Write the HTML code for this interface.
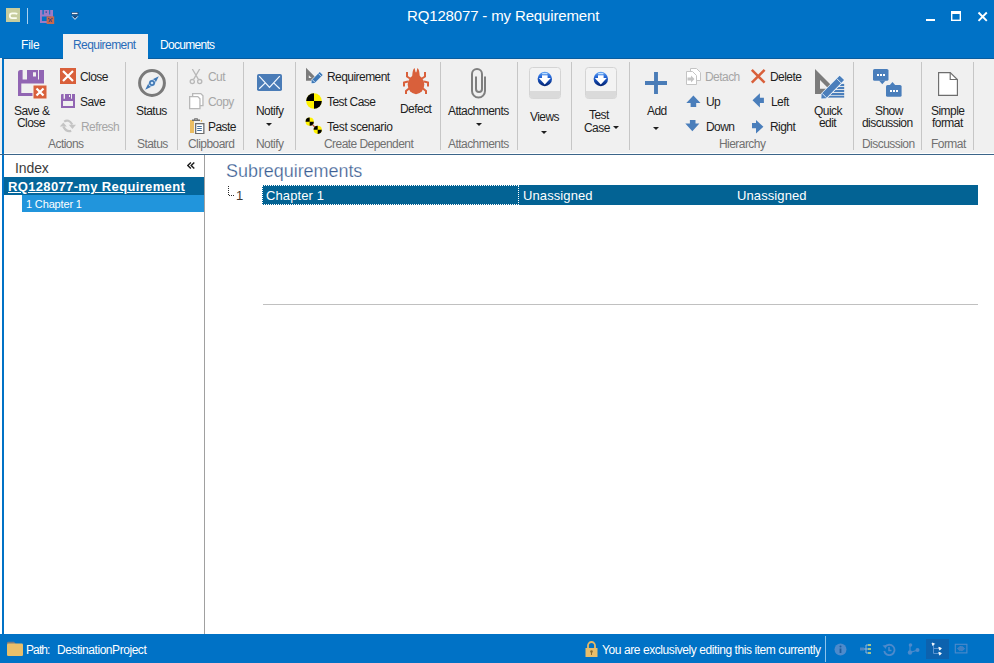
<!DOCTYPE html>
<html><head><meta charset="utf-8"><title>RQ128077 - my Requirement</title>
<style>
html,body{margin:0;padding:0;}
body{width:994px;height:663px;overflow:hidden;position:relative;background:#fff;font-family:"Liberation Sans",sans-serif;}
.t{position:absolute;white-space:pre;}
.r{position:absolute;display:block;}
</style></head><body>
<div class="r" style="left:0px;top:0px;width:994px;height:58px;background:#0072c6;"></div>
<div class="r" style="left:63px;top:34px;width:85px;height:24px;background:#f0f0f0;"></div>
<div class="r" style="left:0px;top:58px;width:2px;height:95px;background:#f0f0f0;"></div>
<div class="r" style="left:2px;top:58px;width:2px;height:576px;background:#0072c6;"></div>
<div class="r" style="left:4px;top:58px;width:990px;height:95px;background:#f0f0f0;"></div>
<div class="r" style="left:2px;top:58px;width:61px;height:1px;background:#0a5d9e;"></div>
<div class="r" style="left:148px;top:58px;width:846px;height:1px;background:#0a5d9e;"></div>
<div class="r" style="left:0px;top:154px;width:994px;height:1px;background:#3b6589;"></div>
<div class="r" style="left:204px;top:155px;width:1px;height:479px;background:#a0a0a0;"></div>
<div class="r" style="left:0px;top:634px;width:994px;height:29px;background:#0072c6;"></div>
<div class="t" style="left:407px;top:8px;font-size:15px;line-height:15px;color:#ffffff;letter-spacing:-0.15px;">RQ128077 - my Requirement</div>
<svg class="r" style="left:6px;top:8px" width="14" height="14" viewBox="0 0 14 14"><rect width="14" height="14" fill="#c7cd9e"/><path d="M11.2 6.3Q10.5 5.3 9 5.3H6.2a2.4 2.4 0 0 0 0 4.8H10.8" fill="none" stroke="#fbfdf0" stroke-width="1.7"/></svg>
<div class="r" style="left:27px;top:8px;width:1px;height:16px;background:#a9d1f0;"></div>
<svg class="r" style="left:40px;top:10px" width="15" height="15" viewBox="0 0 15 15"><path fill-rule="evenodd" fill="#9d7bc6" d="M0 0H13V13H0ZM2.4 0H3.8V4.6H2.4ZM9.2 0H10.2V4.6H9.2ZM1.9 6.5H11.1V11.1H1.9Z"/><rect x="5.6" y="1.2" width="1.2" height="1.8" fill="#3d4f9a"/><rect x="6.6" y="6.4" width="7.6" height="7.6" fill="#c9694d"/><path d="M8.4 8.2l4 4M12.4 8.2l-4 4" stroke="#2c3f80" stroke-width="1.1" stroke-dasharray="1.2 0.6"/></svg>
<svg class="r" style="left:71px;top:11px" width="8" height="10" viewBox="0 0 8 10"><rect x="0.5" y="1" width="7" height="3.2" fill="#204b7a"/><rect x="1" y="1.8" width="5.5" height="1.3" fill="#eef5fc"/><path d="M0.8 4.8L4 8.3L7.2 4.8z" fill="#204b7a"/><path d="M1.2 5.4L4 8.4L6.8 5.4" fill="none" stroke="#dceafa" stroke-width="1"/></svg>
<div class="r" style="left:926px;top:19px;width:9px;height:2px;background:#ffffff;"></div>
<svg class="r" style="left:951px;top:11px" width="10" height="10" viewBox="0 0 10 10"><rect x="0.7" y="0.7" width="8.6" height="8.6" fill="none" stroke="#fff" stroke-width="1.4"/><rect x="0" y="0" width="10" height="3" fill="#fff"/></svg>
<svg class="r" style="left:977px;top:11px" width="11" height="11" viewBox="0 0 11 11"><path d="M1.5 1.5L9.8 9.8M9.8 1.5L1.5 9.8" stroke="#fff" stroke-width="1.9"/></svg>
<div class="t" style="left:21px;top:39px;font-size:12px;line-height:12px;color:#ffffff;letter-spacing:-0.2px;">File</div>
<div class="t" style="left:73px;top:39px;font-size:12px;line-height:12px;color:#2a6cb8;letter-spacing:-0.55px;">Requirement</div>
<div class="t" style="left:160px;top:39px;font-size:12px;line-height:12px;color:#ffffff;letter-spacing:-0.7px;">Documents</div>
<div class="r" style="left:125px;top:62px;width:1px;height:88px;background:#c6c6c6;"></div>
<div class="r" style="left:177px;top:62px;width:1px;height:88px;background:#c6c6c6;"></div>
<div class="r" style="left:243px;top:62px;width:1px;height:88px;background:#c6c6c6;"></div>
<div class="r" style="left:295px;top:62px;width:1px;height:88px;background:#c6c6c6;"></div>
<div class="r" style="left:440px;top:62px;width:1px;height:88px;background:#c6c6c6;"></div>
<div class="r" style="left:517px;top:62px;width:1px;height:88px;background:#c6c6c6;"></div>
<div class="r" style="left:571px;top:62px;width:1px;height:88px;background:#c6c6c6;"></div>
<div class="r" style="left:629px;top:62px;width:1px;height:88px;background:#c6c6c6;"></div>
<div class="r" style="left:853px;top:62px;width:1px;height:88px;background:#c6c6c6;"></div>
<div class="r" style="left:921px;top:62px;width:1px;height:88px;background:#c6c6c6;"></div>
<div class="r" style="left:973px;top:62px;width:1px;height:88px;background:#c6c6c6;"></div>
<div class="t" style="left:48px;top:138px;font-size:12px;line-height:12px;color:#717171;letter-spacing:-0.55px;">Actions</div>
<div class="t" style="left:137px;top:138px;font-size:12px;line-height:12px;color:#717171;letter-spacing:-0.55px;">Status</div>
<div class="t" style="left:188px;top:138px;font-size:12px;line-height:12px;color:#717171;letter-spacing:-0.55px;">Clipboard</div>
<div class="t" style="left:256px;top:138px;font-size:12px;line-height:12px;color:#717171;letter-spacing:-0.55px;">Notify</div>
<div class="t" style="left:324px;top:138px;font-size:12px;line-height:12px;color:#717171;letter-spacing:-0.55px;">Create Dependent</div>
<div class="t" style="left:448px;top:138px;font-size:12px;line-height:12px;color:#717171;letter-spacing:-0.55px;">Attachments</div>
<div class="t" style="left:719px;top:138px;font-size:12px;line-height:12px;color:#717171;letter-spacing:-0.55px;">Hierarchy</div>
<div class="t" style="left:862px;top:138px;font-size:12px;line-height:12px;color:#717171;letter-spacing:-0.55px;">Discussion</div>
<div class="t" style="left:931px;top:138px;font-size:12px;line-height:12px;color:#717171;letter-spacing:-0.55px;">Format</div>
<svg class="r" style="left:18px;top:70px" width="30" height="30" viewBox="0 0 30 30"><path fill-rule="evenodd" fill="#9165b3" d="M2.5 0H26V13.5H15V26H0V2.5Q0 0 2.5 0ZM4.6 0H9V9.6H4.6ZM20 0H21V9.6H20ZM15 2.2H18V6.6H15ZM3.3 13.4H15V22.9H3.3Z"/><rect x="15" y="15" width="14" height="14" fill="#d9603b" stroke="#f6f0ee" stroke-width="1"/><path d="M18.5 18.5l7 7M25.5 18.5l-7 7" stroke="#fff" stroke-width="2.2"/></svg>
<div class="t" style="left:14px;top:105px;font-size:12px;line-height:12px;color:#1e1e1e;letter-spacing:-0.55px;">Save &amp;</div>
<div class="t" style="left:17px;top:117px;font-size:12px;line-height:12px;color:#1e1e1e;letter-spacing:-0.55px;">Close</div>
<svg class="r" style="left:60px;top:68px" width="16" height="16" viewBox="0 0 16 16"><rect width="16" height="16" fill="#d9603b"/><path d="M3 3l10 10M13 3L3 13" stroke="#fff" stroke-width="2.2"/></svg>
<div class="t" style="left:80px;top:71px;font-size:12px;line-height:12px;color:#1e1e1e;letter-spacing:-0.55px;">Close</div>
<svg class="r" style="left:61px;top:94px" width="14" height="14" viewBox="0 0 14 14"><path fill-rule="evenodd" fill="#9165b3" d="M1 0H14V14H0V1Q0 0 1 0ZM2.6 0H4V4.8H2.6ZM10 0H11V4.8H10ZM8 1H9V3H8ZM2 7H12V12H2Z"/></svg>
<div class="t" style="left:80px;top:96px;font-size:12px;line-height:12px;color:#1e1e1e;letter-spacing:-0.55px;">Save</div>
<svg class="r" style="left:59px;top:118px" width="18" height="15" viewBox="0 0 18 15"><path d="M5.2 3.6Q9.5 0.6 13.3 6.5" fill="none" stroke="#c4c4c4" stroke-width="2.2"/><path d="M9.8 6.8H17L13.4 11z" fill="#c4c4c4"/><path d="M12.2 12.8Q7.8 14.6 4.3 8.6" fill="none" stroke="#c4c4c4" stroke-width="2.2"/><path d="M0.8 8.6H7.8L4.3 4.5z" fill="#c4c4c4"/></svg>
<div class="t" style="left:81px;top:121px;font-size:12px;line-height:12px;color:#a6a6a6;letter-spacing:-0.55px;">Refresh</div>
<svg class="r" style="left:138px;top:69px" width="28" height="28" viewBox="0 0 28 28"><circle cx="14" cy="14" r="12.4" fill="none" stroke="#7a7a7a" stroke-width="3"/><g transform="rotate(-45 14 14)"><path d="M4.4 14L14 10.7L23.6 14L14 17.3z" fill="#3f78b5"/></g><circle cx="14" cy="14" r="3.7" fill="#eaf2fa"/><circle cx="14" cy="14" r="3" fill="#3f78b5"/><circle cx="14" cy="14" r="1.3" fill="#cfe3f7"/></svg>
<div class="t" style="left:136px;top:105px;font-size:12px;line-height:12px;color:#1e1e1e;letter-spacing:-0.55px;">Status</div>
<svg class="r" style="left:189px;top:69px" width="14" height="16" viewBox="0 0 14 16"><path d="M3.3 0L9.4 10.4M10.7 0L4.6 10.4" stroke="#b8b8b8" stroke-width="1.3"/><circle cx="3.3" cy="12.6" r="2.1" fill="none" stroke="#b8b8b8" stroke-width="1.3"/><circle cx="10.7" cy="12.6" r="2.1" fill="none" stroke="#b8b8b8" stroke-width="1.3"/></svg>
<div class="t" style="left:208px;top:71px;font-size:12px;line-height:12px;color:#a6a6a6;letter-spacing:-0.55px;">Cut</div>
<svg class="r" style="left:189px;top:93px" width="15" height="17" viewBox="0 0 15 17"><path d="M3.65 0.65H11.8L13.95 2.8V12.6H3.65z" fill="#fff" stroke="#b8b8b8" stroke-width="1.3"/><path d="M0.65 3.65H8.8L10.95 5.8V15.6H0.65z" fill="#fff" stroke="#b8b8b8" stroke-width="1.3"/></svg>
<div class="t" style="left:208px;top:96px;font-size:12px;line-height:12px;color:#a6a6a6;letter-spacing:-0.55px;">Copy</div>
<svg class="r" style="left:189px;top:117px" width="16" height="17" viewBox="0 0 16 17"><rect x="1" y="3" width="4" height="13" fill="#ebbd62"/><rect x="11.8" y="3" width="1.3" height="1.8" fill="#ebbd62"/><path fill-rule="evenodd" fill="#6d6d6d" d="M3 2.6H5.2V1.2H8.8V2.6H11V4.1H3ZM6.2 1.9H7.8V2.6H6.2Z"/><rect x="6.65" y="6.65" width="8.2" height="10" fill="#fff" stroke="#6d6d6d" stroke-width="1.3"/><path d="M8.2 9.5h4.6M8.2 11.5h4.6M8.2 13.5h4.6" stroke="#46709e" stroke-width="1.1"/></svg>
<div class="t" style="left:208px;top:121px;font-size:12px;line-height:12px;color:#1e1e1e;letter-spacing:-0.55px;">Paste</div>
<svg class="r" style="left:257px;top:74px" width="25" height="17" viewBox="0 0 25 17"><rect width="25" height="17" rx="1.8" fill="#4a7cb7"/><path d="M2.2 2.2L12.5 13.3L22.8 2.2M2.2 14.8L8.6 8.6M22.8 14.8L16.4 8.6" fill="none" stroke="#f4f9ff" stroke-width="1.2"/></svg>
<div class="t" style="left:256px;top:105px;font-size:12px;line-height:12px;color:#1e1e1e;letter-spacing:-0.55px;">Notify</div>
<svg class="r" style="left:266px;top:123px" width="6" height="3" viewBox="0 0 6 3"><path d="M0 0h6L3 3z" fill="#1e1e1e"/></svg>
<svg class="r" style="left:305px;top:67px" width="18" height="18" viewBox="0 0 18 18"><path fill-rule="evenodd" fill="#7b7b7b" d="M1 0.8V13.8H9.8L10.6 10.4ZM3.8 8.2V11H6.6Z"/><g transform="rotate(-45 11.5 11.3)"><path d="M4.5 11.3L6.8 9.2H18.2V13.4H6.8Z" fill="#3e78b6" stroke="#eef5fb" stroke-width="1.2" paint-order="stroke"/><path d="M7.6 9.2V13.4M16.2 9.2V13.4" stroke="#cfe3f7" stroke-width="0.9"/></g></svg>
<div class="t" style="left:327px;top:71px;font-size:12px;line-height:12px;color:#1e1e1e;letter-spacing:-0.55px;">Requirement</div>
<svg class="r" style="left:306px;top:93px" width="16" height="16" viewBox="0 0 16 16"><circle cx="8" cy="8" r="7.8" fill="#fff200"/><path d="M8 8V0.2A7.8 7.8 0 0 0 0.2 8z" fill="#000"/><path d="M8 8V15.8A7.8 7.8 0 0 0 15.8 8z" fill="#000"/></svg>
<div class="t" style="left:327px;top:96px;font-size:12px;line-height:12px;color:#1e1e1e;letter-spacing:-0.55px;">Test Case</div>
<svg class="r" style="left:305px;top:117px" width="18" height="18" viewBox="0 0 18 18"><g transform="translate(0.5,0.5)"><circle cx="4.2" cy="4.2" r="4.1" fill="#fff200"/><path d="M4.2 4.2V0.1A4.1 4.1 0 0 0 0.1 4.2z" fill="#000"/><path d="M4.2 4.2V8.3A4.1 4.1 0 0 0 8.3 4.2z" fill="#000"/></g><g transform="translate(8.5,8.6)"><circle cx="4.2" cy="4.2" r="4.1" fill="#fff200"/><path d="M4.2 4.2V0.1A4.1 4.1 0 0 0 0.1 4.2z" fill="#000"/><path d="M4.2 4.2V8.3A4.1 4.1 0 0 0 8.3 4.2z" fill="#000"/></g><path d="M7.5 7.8L9.8 10" stroke="#b0563a" stroke-width="1.2"/></svg>
<div class="t" style="left:327px;top:121px;font-size:12px;line-height:12px;color:#1e1e1e;letter-spacing:-0.4px;">Test scenario</div>
<svg class="r" style="left:402px;top:67px" width="28" height="29" viewBox="0 0 28 29"><g fill="none" stroke="#d9603b" stroke-width="2"><path d="M5 5V9.5L8 11.5"/><path d="M23 5V9.5L20 11.5"/><path d="M2 19.5V15.5L6 14.5"/><path d="M26 19.5V15.5L22 14.5"/><path d="M4 27L4 24L7 21.5"/><path d="M24 27L24 24L21 21.5"/></g><ellipse cx="14" cy="17.5" rx="8.3" ry="9.7" fill="#d9603b"/><path d="M10.3 10C10.3 4.5 11.3 2 12.6 1L13.6 5.2H14.4L15.4 1C16.7 2 17.7 4.5 17.7 10z" fill="#d9603b"/></svg>
<div class="t" style="left:400px;top:103px;font-size:12px;line-height:12px;color:#1e1e1e;letter-spacing:-0.55px;">Defect</div>
<svg class="r" style="left:468px;top:66px" width="20" height="34" viewBox="0 0 20 34"><path d="M17 10.5V25A6.5 6.5 0 0 1 4 25V8A5 5 0 0 1 14 8V23A3 3 0 0 1 8 23V10.5" fill="none" stroke="#7f7f7f" stroke-width="2"/></svg>
<div class="t" style="left:448px;top:105px;font-size:12px;line-height:12px;color:#1e1e1e;letter-spacing:-0.55px;">Attachments</div>
<svg class="r" style="left:476px;top:123px" width="6" height="3" viewBox="0 0 6 3"><path d="M0 0h6L3 3z" fill="#1e1e1e"/></svg>
<svg class="r" style="left:529px;top:67px" width="32" height="32" viewBox="0 0 32 32"><defs><linearGradient id="g529" x1="0" y1="0" x2="0" y2="1"><stop offset="0" stop-color="#6aa8f4"/><stop offset="0.35" stop-color="#2366d8"/><stop offset="1" stop-color="#002070"/></linearGradient></defs><rect x="0.5" y="0.5" width="31" height="31" rx="3" fill="#f3f3f3" stroke="#d4d4d4"/><path d="M1 24h30v4.5a3 3 0 0 1 -3 3h-24a3 3 0 0 1 -3 -3z" fill="#dadada"/><circle cx="15.8" cy="12" r="7.2" fill="url(#g529)"/><rect x="13.2" y="6" width="5.2" height="1.3" fill="#bfe0ff"/><rect x="13" y="8.3" width="5.6" height="3" fill="#fff"/><path d="M9.8 11.1H21.8L15.8 17.4z" fill="#fff"/></svg>
<div class="t" style="left:530px;top:111px;font-size:12px;line-height:12px;color:#1e1e1e;letter-spacing:-0.55px;">Views</div>
<svg class="r" style="left:541px;top:131px" width="6" height="3" viewBox="0 0 6 3"><path d="M0 0h6L3 3z" fill="#1e1e1e"/></svg>
<svg class="r" style="left:585px;top:67px" width="32" height="32" viewBox="0 0 32 32"><defs><linearGradient id="g585" x1="0" y1="0" x2="0" y2="1"><stop offset="0" stop-color="#6aa8f4"/><stop offset="0.35" stop-color="#2366d8"/><stop offset="1" stop-color="#002070"/></linearGradient></defs><rect x="0.5" y="0.5" width="31" height="31" rx="3" fill="#f3f3f3" stroke="#d4d4d4"/><path d="M1 24h30v4.5a3 3 0 0 1 -3 3h-24a3 3 0 0 1 -3 -3z" fill="#dadada"/><circle cx="15.8" cy="12" r="7.2" fill="url(#g585)"/><rect x="13.2" y="6" width="5.2" height="1.3" fill="#bfe0ff"/><rect x="13" y="8.3" width="5.6" height="3" fill="#fff"/><path d="M9.8 11.1H21.8L15.8 17.4z" fill="#fff"/></svg>
<div class="t" style="left:589px;top:109px;font-size:12px;line-height:12px;color:#1e1e1e;letter-spacing:-0.55px;">Test</div>
<div class="t" style="left:584px;top:122px;font-size:12px;line-height:12px;color:#1e1e1e;letter-spacing:-0.55px;">Case</div>
<svg class="r" style="left:613px;top:126px" width="6" height="3" viewBox="0 0 6 3"><path d="M0 0h6L3 3z" fill="#1e1e1e"/></svg>
<svg class="r" style="left:645px;top:72px" width="22" height="22" viewBox="0 0 22 22"><path d="M9.05 0H12.95V9.05H22V12.95H12.95V22H9.05V12.95H0V9.05H9.05z" fill="#4a7cb7"/></svg>
<div class="t" style="left:647px;top:105px;font-size:12px;line-height:12px;color:#1e1e1e;letter-spacing:-0.55px;">Add</div>
<svg class="r" style="left:653px;top:127px" width="6" height="3" viewBox="0 0 6 3"><path d="M0 0h6L3 3z" fill="#1e1e1e"/></svg>
<svg class="r" style="left:686px;top:68px" width="15" height="17" viewBox="0 0 15 17"><path d="M4.5 0.5h6l4 4v8h-10z" fill="#fff" stroke="#c4c4c4"/><path d="M0.5 3.5h6l4 4v9h-10z" fill="#fff" stroke="#c4c4c4"/><path d="M1.5 9.5H5V7.5L8.5 11L5 14.5V12.5H1.5z" fill="#c4c4c4"/></svg>
<div class="t" style="left:705px;top:71px;font-size:12px;line-height:12px;color:#a6a6a6;letter-spacing:-0.55px;">Detach</div>
<svg class="r" style="left:686px;top:95px" width="15" height="13" viewBox="0 0 15 13"><path d="M7.4 0.4L14.5 8H10.2V12H4.6V8H0.3z" fill="#4a7ebb"/></svg>
<div class="t" style="left:706px;top:96px;font-size:12px;line-height:12px;color:#1e1e1e;letter-spacing:-0.55px;">Up</div>
<svg class="r" style="left:685px;top:119px" width="15" height="13" viewBox="0 0 15 13"><path d="M0.3 4.5H4.9V0.9H10.5V4.5H14.4L7.35 12.3z" fill="#4a7ebb"/></svg>
<div class="t" style="left:706px;top:121px;font-size:12px;line-height:12px;color:#1e1e1e;letter-spacing:-0.55px;">Down</div>
<svg class="r" style="left:750px;top:68px" width="16" height="16" viewBox="0 0 16 16"><path d="M1.8 1.8L14.6 14.6M14.6 1.8L1.8 14.6" stroke="#d9603b" stroke-width="2.5"/></svg>
<div class="t" style="left:770px;top:71px;font-size:12px;line-height:12px;color:#1e1e1e;letter-spacing:-0.55px;">Delete</div>
<svg class="r" style="left:752px;top:93px" width="13" height="15" viewBox="0 0 13 15"><path d="M0.5 7.3L7.9 0.3V4.7H11.9V10.1H7.9V14.4z" fill="#4a7ebb"/></svg>
<div class="t" style="left:771px;top:96px;font-size:12px;line-height:12px;color:#1e1e1e;letter-spacing:-0.55px;">Left</div>
<svg class="r" style="left:752px;top:119px" width="13" height="15" viewBox="0 0 13 15"><path d="M0 3.9H4V0.9L11.4 7.7L4 14.5V9.2H0z" fill="#4a7ebb"/></svg>
<div class="t" style="left:770px;top:121px;font-size:12px;line-height:12px;color:#1e1e1e;letter-spacing:-0.55px;">Right</div>
<svg class="r" style="left:814px;top:69px" width="31" height="31" viewBox="0 0 31 31"><path fill-rule="evenodd" fill="#7b7b7b" d="M1 0V25H14L17.5 16.5ZM6 11V19.7H14.7Z"/><clipPath id="qc"><path d="M30.2 12.5V28.8H13.5z"/></clipPath><g clip-path="url(#qc)" fill="#4a7ebb"><rect x="0" y="14.9" width="31" height="2.1"/><rect x="0" y="17.9" width="31" height="2.1"/><rect x="0" y="20.9" width="31" height="2.1"/><rect x="0" y="23.9" width="31" height="2.1"/><rect x="0" y="26.7" width="31" height="2.1"/></g><g transform="rotate(-45 17.6 19.15)"><path d="M3.1 19.15L6.6 16H32.1V22.3H6.6Z" fill="#4a7ebb" stroke="#eef5fb" stroke-width="1.3" paint-order="stroke"/><path d="M7.2 16V22.3M28 16V22.3" stroke="#dcebf8" stroke-width="0.9"/></g></svg>
<div class="t" style="left:814px;top:105px;font-size:12px;line-height:12px;color:#1e1e1e;letter-spacing:-0.55px;">Quick</div>
<div class="t" style="left:819px;top:117px;font-size:12px;line-height:12px;color:#1e1e1e;letter-spacing:-0.55px;">edit</div>
<svg class="r" style="left:873px;top:69px" width="30" height="28" viewBox="0 0 30 28"><rect x="0" y="0" width="15.5" height="11.8" rx="1.6" fill="#4a7ebb"/><path d="M6 11.5H12.6L9.3 15.2z" fill="#4a7ebb"/><rect x="13" y="16" width="15.6" height="11.8" rx="1.6" fill="#4a7ebb"/><path d="M16.4 16.5H22.6L19.5 13z" fill="#4a7ebb"/><path d="M4 6h2M7 6h2M10 6h2M17 22h2M20 22h2M23 22h2" stroke="#fff" stroke-width="2"/></svg>
<div class="t" style="left:875px;top:105px;font-size:12px;line-height:12px;color:#1e1e1e;letter-spacing:-0.55px;">Show</div>
<div class="t" style="left:862px;top:117px;font-size:12px;line-height:12px;color:#1e1e1e;letter-spacing:-0.55px;">discussion</div>
<svg class="r" style="left:937px;top:71px" width="22" height="26" viewBox="0 0 22 26"><path d="M1.6 1.55H13.2L20.4 8.6V24.35H1.6z" fill="#fff" stroke="#6d6d6d" stroke-width="1.15"/><path d="M13.2 1.55V8.5H20.4" fill="none" stroke="#6d6d6d" stroke-width="1.15"/></svg>
<div class="t" style="left:931px;top:105px;font-size:12px;line-height:12px;color:#1e1e1e;letter-spacing:-0.55px;">Simple</div>
<div class="t" style="left:932px;top:117px;font-size:12px;line-height:12px;color:#1e1e1e;letter-spacing:-0.55px;">format</div>
<div class="t" style="left:15px;top:161px;font-size:14px;line-height:14px;color:#3c3c3c;letter-spacing:-0.1px;">Index</div>
<svg class="r" style="left:187px;top:162px" width="8" height="8" viewBox="0 0 8 8"><path d="M3.9 0.6L0.8 3.6L3.9 6.6M7.3 0.6L4.2 3.6L7.3 6.6" fill="none" stroke="#1e1e1e" stroke-width="1.45"/></svg>
<div class="r" style="left:4px;top:177px;width:200px;height:18px;background:#04669b;"></div>
<div class="t" style="left:8px;top:180px;font-size:13px;line-height:13px;color:#ffffff;letter-spacing:0.35px;font-weight:bold;text-decoration:underline;">RQ128077-my Requirement</div>
<div class="r" style="left:22px;top:195px;width:182px;height:17px;background:#2195dc;"></div>
<div class="t" style="left:26px;top:199px;font-size:11px;line-height:11px;color:#ffffff;letter-spacing:-0.15px;">1 Chapter 1</div>
<div class="t" style="left:226px;top:162px;font-size:18px;line-height:18px;color:#3c5f94;letter-spacing:-0.05px;-webkit-text-stroke:0.25px #ffffff;">Subrequirements</div>
<svg class="r" style="left:228px;top:185px" width="6" height="11" viewBox="0 0 6 11"><path d="M0 1h1v1h-1zM0 3h1v1h-1zM0 5h1v1h-1zM0 7h1v1h-1zM0 9h1v1h-1zM1 10h1v1h-1zM3 10h1v1h-1zM5 10h1v1h-1z" fill="#2a2a2a"/></svg>
<div class="t" style="left:236px;top:189px;font-size:13px;line-height:13px;color:#3f3a34;">1</div>
<div class="r" style="left:262px;top:185px;width:716px;height:20px;background:#036394;"></div>
<div class="r" style="left:262px;top:185px;width:257px;height:20px;background:transparent;border:1px dotted #fff;box-sizing:border-box;"></div>
<div class="t" style="left:266px;top:189px;font-size:13px;line-height:13px;color:#ffffff;letter-spacing:0.1px;">Chapter 1</div>
<div class="t" style="left:523px;top:189px;font-size:13px;line-height:13px;color:#ffffff;letter-spacing:0.1px;">Unassigned</div>
<div class="t" style="left:737px;top:189px;font-size:13px;line-height:13px;color:#ffffff;letter-spacing:0.1px;">Unassigned</div>
<div class="r" style="left:263px;top:304px;width:715px;height:1px;background:#c0c0c0;"></div>
<svg class="r" style="left:6px;top:641px" width="17" height="15" viewBox="0 0 17 15"><path d="M1 3.2V2a1.2 1.2 0 0 1 1.2 -1.2H8L9.5 2.4V3.2z" fill="#7c7c7c"/><rect x="1" y="2.6" width="16" height="12.4" rx="1.3" fill="#e9bf6b"/></svg>
<div class="t" style="left:26px;top:644px;font-size:12px;line-height:12px;color:#ffffff;letter-spacing:-0.9px;">Path:</div>
<div class="t" style="left:57px;top:644px;font-size:12px;line-height:12px;color:#ffffff;letter-spacing:-0.45px;">DestinationProject</div>
<svg class="r" style="left:585px;top:641px" width="13" height="16" viewBox="0 0 13 16"><path d="M3 7V4.5a3.5 3.5 0 0 1 7 0V7" fill="none" stroke="#e6b865" stroke-width="1.8"/><rect x="0.5" y="7" width="12" height="9" fill="#e8bd6a"/><circle cx="6.5" cy="10.5" r="1.3" fill="#8a6a30"/><rect x="6" y="11" width="1" height="3" fill="#8a6a30"/></svg>
<div class="t" style="left:602px;top:644px;font-size:12px;line-height:12px;color:#ffffff;letter-spacing:-0.42px;">You are exclusively editing this item currently</div>
<div class="r" style="left:825px;top:636px;width:1px;height:26px;background:#8cc3ec;"></div>
<svg class="r" style="left:834px;top:643px" width="13" height="13" viewBox="0 0 13 13"><circle cx="6.5" cy="6.5" r="6" fill="#4d8acb"/><rect x="5.6" y="5.5" width="1.8" height="4.5" fill="#1d5c9e"/><circle cx="6.5" cy="3.6" r="1" fill="#1d5c9e"/></svg>
<svg class="r" style="left:860px;top:643px" width="11" height="12" viewBox="0 0 11 12"><rect x="0" y="4.5" width="4" height="3" fill="#4f86c2"/><path d="M4 6H6M6 2V10M6 2H8M6 6H8M6 10H8" stroke="#8fb4dc" stroke-width="1"/><rect x="8" y="1" width="3" height="2" fill="#a7c48a"/><rect x="8" y="5" width="3" height="2" fill="#a7c48a"/><rect x="8" y="9" width="3" height="2" fill="#a7c48a"/></svg>
<svg class="r" style="left:882px;top:643px" width="14" height="13" viewBox="0 0 14 13"><path d="M3 4A5.2 5.2 0 1 1 2.2 8" fill="none" stroke="#4d8acb" stroke-width="1.8"/><path d="M0.5 2.5L4.5 2L4 6z" fill="#4d8acb"/><path d="M7 4V7.5H9.5" fill="none" stroke="#4d8acb" stroke-width="1.5"/></svg>
<svg class="r" style="left:907px;top:643px" width="13" height="12" viewBox="0 0 13 12"><path d="M3 1.5L3 9.5L11 7" fill="none" stroke="#4d8acb" stroke-width="1.2"/><circle cx="3.5" cy="2" r="1.8" fill="#4d8acb"/><circle cx="3" cy="9.5" r="2.2" fill="#4d8acb"/><circle cx="10.5" cy="7" r="2" fill="#4d8acb"/></svg>
<div class="r" style="left:926px;top:639px;width:23px;height:20px;background:#0d62ae;"></div>
<svg class="r" style="left:931px;top:642px" width="12" height="14" viewBox="0 0 12 14"><path d="M2.5 3V11.5H8M2.5 6.5H8" fill="none" stroke="#5b94d0" stroke-width="1"/><path d="M1 1L3.5 1.8L1.8 3.5z" fill="#fff" stroke="#fff" stroke-width="0.8"/><path d="M7.8 5.2L10.4 6.3L8.6 8.2z" fill="#fff" stroke="#fff" stroke-width="0.8"/><path d="M7.8 10.2L10.4 11.3L8.6 13.2z" fill="#fff" stroke="#fff" stroke-width="0.8"/></svg>
<svg class="r" style="left:954px;top:643px" width="14" height="11" viewBox="0 0 14 11"><rect x="1.3" y="1.3" width="11.6" height="8.6" fill="none" stroke="#4d8acb" stroke-width="1.1"/><path d="M3.5 5.6L5.6 3.5H8.6L10.7 5.6L8.6 7.7H5.6z" fill="#3f7fc2" stroke="#4d8acb" stroke-width="0.8" stroke-dasharray="1 0.6"/></svg>
</body></html>
